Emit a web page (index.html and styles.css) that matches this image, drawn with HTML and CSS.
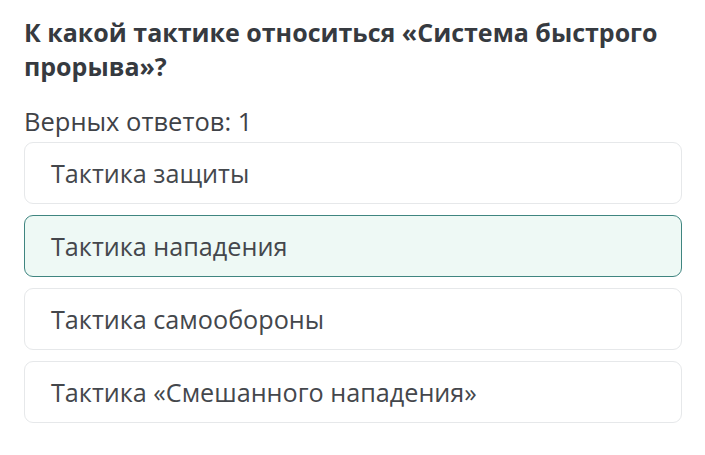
FILE: index.html
```html
<!DOCTYPE html>
<html lang="ru">
<head>
    <meta charset="UTF-8">
    <meta name="viewport" content="width=device-width, initial-scale=1.0">
    <title>Вопрос</title>
    <link rel="stylesheet" href="styles.css">
</head>
<body>
    <main class="question">
        <h1 class="question-title">К какой тактике относиться «Система быстрого прорыва»?</h1>
        <p class="answers-count">Верных ответов: 1</p>

        <div class="options">
            <div class="option">Тактика защиты</div>
            <div class="option option-selected">Тактика нападения</div>
            <div class="option">Тактика самообороны</div>
            <div class="option">Тактика «Смешанного нападения»</div>
        </div>
    </main>
</body>
</html>
```

FILE: styles.css
```css
* {
    margin: 0;
    padding: 0;
    box-sizing: border-box;
}
body {
    font-family: 'Open Sans', sans-serif;
    background-color: #fff;
    color: #3a3d42;
}
.question {
    padding: 15px 23px 0 24px;
}
.question-title {
    font-size: 25px;
    font-weight: 700;
    line-height: 34px;
    color: #363a40;
}
.answers-count {
    margin-top: 22px;
    font-size: 25.5px;
    line-height: 32px;
    color: #3f4247;
}
.options {
    display: flex;
    flex-direction: column;
    gap: 11px;
    margin-top: 5px;
}
.option {
    height: 62px;
    display: flex;
    align-items: center;
    padding: 0 26px;
    border: 1px solid #e6e8ea;
    border-radius: 9px;
    font-size: 25.2px;
    color: #44474c;
}
.option-selected {
    background-color: #eef9f5;
    border-color: #3f8580;
}
```
